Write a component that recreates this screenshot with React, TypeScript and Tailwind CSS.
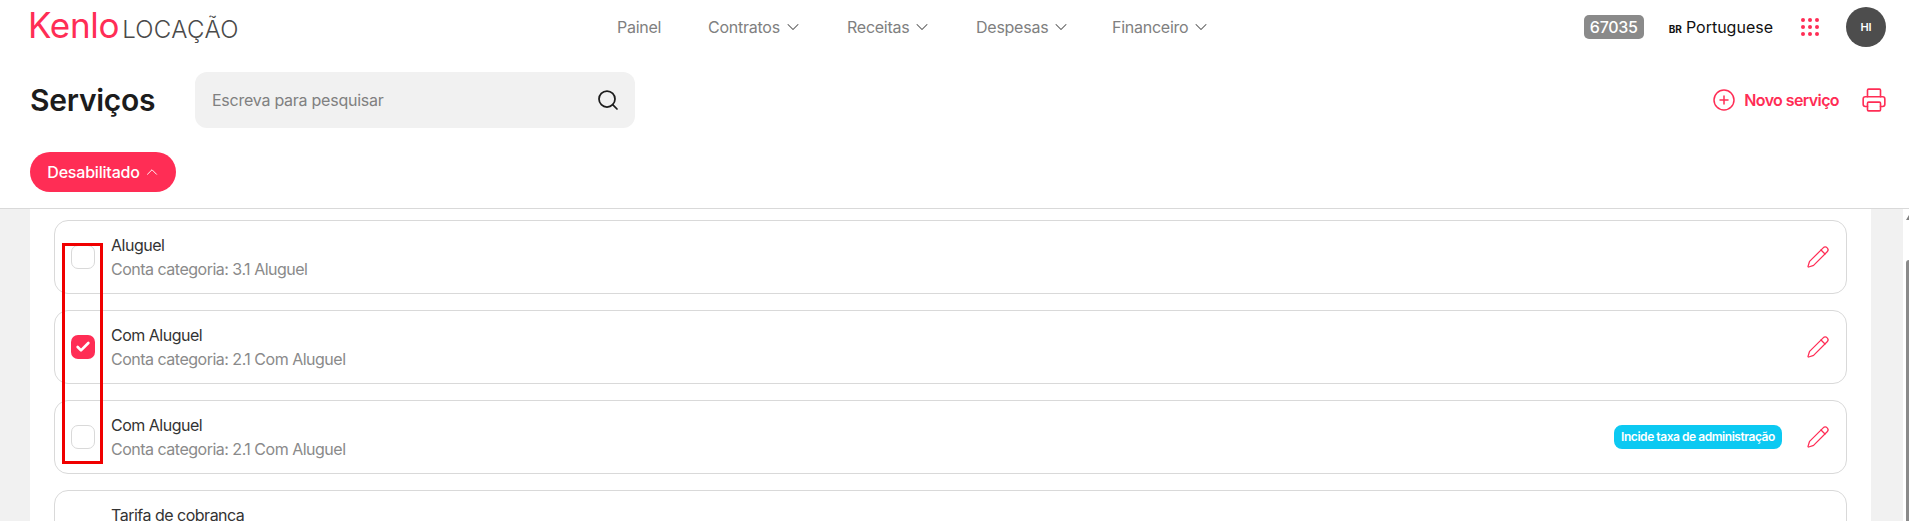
import { Check, ChevronDown, ChevronUp, CirclePlus, Pencil, Printer, Search } from 'lucide-react';

const navItems = [
  { label: 'Contratos', width: 'w-[139px]' },
  { label: 'Receitas', width: 'w-[129px]' },
  { label: 'Despesas', width: 'w-[136px]' },
  { label: 'Financeiro', width: 'w-auto' },
];

const services = [
  { title: 'Aluguel', sub: 'Conta categoria: 3.1 Aluguel', checked: false, badge: false, height: 'h-[74px]' },
  { title: 'Com Aluguel', sub: 'Conta categoria: 2.1 Com Aluguel', checked: true, badge: false, height: 'h-[74px]' },
  { title: 'Com Aluguel', sub: 'Conta categoria: 2.1 Com Aluguel', checked: false, badge: true, height: 'h-[74px]' },
  { title: 'Tarifa de cobranca', sub: '', checked: false, badge: false, height: 'h-[120px]' },
];

function Header() {
  return (
    <header className="h-[209px] shrink-0 border-b border-[#d9d9d9] bg-white">
      {/* Top bar */}
      <div className="flex h-[54px] items-center pl-[30px] pr-[23px]">
        <div className="flex w-[587px] items-baseline">
          <span className="-ml-[2px] text-[35px] leading-[40px] font-normal tracking-[-0.3px] text-[#ff2d55]">Kenlo</span>
          <span className="ml-[3px] text-[24px] leading-[40px] font-light tracking-[0.3px] text-[#4a4a4a]">LOCAÇÃO</span>
        </div>
        <nav className="flex flex-1 items-center text-[16px] tracking-[-0.25px] text-[#808080]">
          <span className="w-[91px]">Painel</span>
          {navItems.map((item) => (
            <span key={item.label} className={`flex items-center gap-[3px] ${item.width}`}>
              {item.label}
              <ChevronDown className="h-[20px] w-[20px] text-[#555555]" strokeWidth={1.25} />
            </span>
          ))}
        </nav>
        <span className="flex h-[24px] w-[60px] items-center justify-center rounded-[5px] bg-[#8a8a8a] text-[16px] font-medium tracking-[-0.3px] text-white">67035</span>
        <span className="ml-[25px] flex items-baseline gap-[4px] text-[#111111]">
          <span className="text-[10px] font-bold">BR</span>
          <span className="text-[16px]">Portuguese</span>
        </span>
        <div className="ml-[28px] grid w-[18px] grid-cols-3 gap-[3px]">
          {Array.from({ length: 9 }).map((_, i) => (
            <span key={i} className="h-[4px] w-[4px] rounded-full bg-[#ff2d55]" />
          ))}
        </div>
        <div className="ml-[27px] flex h-[40px] w-[40px] items-center justify-center rounded-full bg-[#4d4d4d] text-[11px] font-semibold text-white">HI</div>
      </div>

      {/* Title and search */}
      <div className="mt-[18px] flex h-[56px] items-center pl-[30px] pr-[22px]">
        <h1 className="w-[165px] text-[30px] leading-[36px] font-semibold tracking-[-0.25px] text-[#1c1c1c]">Serviços</h1>
        <div className="flex h-[56px] w-[440px] items-center justify-between rounded-[12px] bg-[#f1f1f1] pl-[17px] pr-[15px]">
          <span className="text-[16px] tracking-[-0.25px] text-[#808080]">Escreva para pesquisar</span>
          <Search className="h-[24px] w-[24px] text-[#1c1c1c]" strokeWidth={1.75} />
        </div>
        <div className="ml-auto flex items-center text-[#ff2d55]">
          <CirclePlus className="h-[24px] w-[24px]" strokeWidth={1.5} />
          <span className="ml-[8px] text-[16px] font-semibold tracking-[-0.6px]">Novo serviço</span>
          <Printer className="ml-[22px] h-[26px] w-[26px]" strokeWidth={1.5} />
        </div>
      </div>

      {/* Filter */}
      <div className="mt-[24px] pl-[30px]">
        <button className="flex h-[40px] w-[146px] items-center justify-center gap-[3px] rounded-[20px] bg-[#ff2d55] pl-[2px] text-[16px] font-medium tracking-[-0.2px] text-white">
          Desabilitado
          <ChevronUp className="h-[18px] w-[18px]" strokeWidth={1.25} />
        </button>
      </div>
    </header>
  );
}

function ServiceCard({ title, sub, checked, badge, height }: (typeof services)[number]) {
  return (
    <div className={`flex shrink-0 items-center rounded-[14px] border border-[#d9d9d9] bg-white pl-[16px] pr-[16px] ${height}`}>
      {checked ? (
        <span className="flex h-[24px] w-[24px] items-center justify-center rounded-[7px] bg-[#ff2d55]">
          <Check className="h-[16px] w-[16px] text-white" strokeWidth={4} />
        </span>
      ) : (
        <span className="h-[24px] w-[24px] rounded-[7px] border border-[#d9d9d9] bg-white" />
      )}
      <div className="ml-[16px] flex-1 self-start pt-[12px] tracking-[-0.5px]">
        <div className="text-[16px] leading-[24px] text-[#333333]">{title}</div>
        {sub && <div className="text-[16px] leading-[24px] text-[#8a8a8a]">{sub}</div>}
      </div>
      {badge && (
        <span className="mr-[24px] flex h-[24px] w-[168px] items-center justify-center rounded-[8px] bg-[#0cc9f2] text-[12px] font-semibold tracking-[-0.45px] text-white">
          Incide taxa de administração
        </span>
      )}
      <Pencil className="h-[24px] w-[24px] text-[#ff2d55]" strokeWidth={1.25} />
    </div>
  );
}

export default function App() {
  return (
    <div className="flex h-screen flex-col overflow-hidden bg-white font-['Inter',sans-serif]">
      <Header />
      <div className="flex min-h-0 flex-1">
        <main className="relative min-w-0 flex-1 overflow-hidden bg-[#f1f1f1] pl-[30px] pr-[32px]">
          <div className="flex h-full flex-col gap-[16px] bg-white pl-[24px] pr-[24px] pt-[11px]">
            {services.map((service, i) => (
              <ServiceCard key={i} {...service} />
            ))}
          </div>
          {/* Red annotation drawn over the checkboxes */}
          <div className="absolute left-[62px] top-[34px] h-[221px] w-[41px] border-[3px] border-[#f00000]" />
        </main>
        {/* Scrollbar */}
        <div className="relative w-[6px] shrink-0 bg-white">
          <svg className="absolute right-0 top-[6px] h-[5px] w-[3px]" viewBox="0 0 3 5">
            <path d="M3 0 L3 5 L0 5 Z" fill="#808080" />
          </svg>
          <div className="absolute bottom-0 right-0 top-[51px] w-[3px] rounded-tl-[3px] bg-[#8a8a8a]" />
        </div>
      </div>
    </div>
  );
}
